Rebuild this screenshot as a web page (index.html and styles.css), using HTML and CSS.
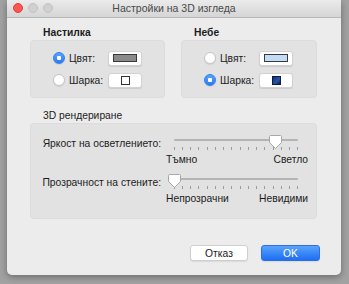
FILE: index.html
```
<!DOCTYPE html>
<html lang="bg">
<head>
    <meta charset="UTF-8">
    <title>Настройки на 3D изгледа</title>
    <link rel="stylesheet" href="styles.css">
</head>
<body>
    <div class="window">
        <div class="titlebar">
            <div class="lights">
                <span class="light red"></span>
                <span class="light"></span>
                <span class="light"></span>
            </div>
            <div class="title">Настройки на 3D изгледа</div>
        </div>

        <div class="content">
            <div class="groups">
                <!-- Floor -->
                <section class="group">
                    <h2>Настилка</h2>
                    <div class="box">
                        <div class="option">
                            <span class="radio checked"></span>
                            <span class="option-label">Цвят:</span>
                            <span class="swatch"><span class="color grey"></span></span>
                        </div>
                        <div class="option">
                            <span class="radio"></span>
                            <span class="option-label">Шарка:</span>
                            <span class="swatch"><span class="pattern empty"></span></span>
                        </div>
                    </div>
                </section>

                <!-- Sky -->
                <section class="group">
                    <h2>Небе</h2>
                    <div class="box">
                        <div class="option">
                            <span class="radio"></span>
                            <span class="option-label">Цвят:</span>
                            <span class="swatch"><span class="color sky"></span></span>
                        </div>
                        <div class="option">
                            <span class="radio checked"></span>
                            <span class="option-label">Шарка:</span>
                            <span class="swatch"><span class="pattern night"></span></span>
                        </div>
                    </div>
                </section>
            </div>

            <!-- Rendering -->
            <section class="group render">
                <h2>3D рендериране</h2>
                <div class="box sliders">
                    <div class="slider-label">Яркост на осветлението:</div>
                    <div class="slider">
                        <svg width="142" height="17" viewBox="0 0 142 17">
                            <rect x="8" y="5" width="124" height="2" rx="1" fill="#b4b4b4"/>
                            <g stroke="#9a9a9a" stroke-width="1">
                                <path d="M8.5 13v3M16.5 13v3M24.5 13v3M32.5 13v3M41.5 13v3M49.5 13v3M57.5 13v3M65.5 13v3M74.5 13v3M82.5 13v3M90.5 13v3M98.5 13v3M107.5 13v3M115.5 13v3M123.5 13v3M131.5 13v3"/>
                            </g>
                            <path d="M104.5 1.5h10a1 1 0 0 1 1 1v6l-6 6l-6-6v-6a1 1 0 0 1 1-1z" fill="#fff" stroke="#a8a8a8"/>
                        </svg>
                        <div class="ticks"><span>Тъмно</span><span>Светло</span></div>
                    </div>

                    <div class="slider-label">Прозрачност на стените:</div>
                    <div class="slider">
                        <svg width="142" height="17" viewBox="0 0 142 17">
                            <rect x="8" y="5" width="124" height="2" rx="1" fill="#b4b4b4"/>
                            <g stroke="#9a9a9a" stroke-width="1">
                                <path d="M8.5 13v3M16.5 13v3M24.5 13v3M32.5 13v3M41.5 13v3M49.5 13v3M57.5 13v3M65.5 13v3M74.5 13v3M82.5 13v3M90.5 13v3M98.5 13v3M107.5 13v3M115.5 13v3M123.5 13v3M131.5 13v3"/>
                            </g>
                            <path d="M3.5 1.5h10a1 1 0 0 1 1 1v6l-6 6l-6-6v-6a1 1 0 0 1 1-1z" fill="#fff" stroke="#a8a8a8"/>
                        </svg>
                        <div class="ticks"><span>Непрозрачни</span><span>Невидими</span></div>
                    </div>
                </div>
            </section>

            <div class="actions">
                <button class="btn">Отказ</button>
                <button class="btn primary">OK</button>
            </div>
        </div>
    </div>
</body>
</html>
```

FILE: styles.css
```
* {
    margin: 0;
    padding: 0;
    box-sizing: border-box;
}
body {
    font-family: 'Liberation Sans', Arial, sans-serif;
    font-size: 10.3px;
    color: #1c1c1c;
    background-color: #a2a2a2;
    width: 349px;
    height: 284px;
    overflow: hidden;
}
.window {
    margin-left: 7px;
    width: 334px;
    height: 275px;
    background-color: #ececec;
    border-radius: 0 0 5px 5px;
    box-shadow: 0 2px 7px rgba(0, 0, 0, 0.35);
    overflow: hidden;
}
.titlebar {
    height: 18px;
    display: flex;
    align-items: center;
    position: relative;
    background: linear-gradient(#ebebeb, #d5d5d5);
    border-bottom: 1px solid #b8b8b8;
}
.lights {
    display: flex;
    gap: 5px;
    padding-left: 6px;
    margin-top: -2px;
}
.light {
    width: 10px;
    height: 10px;
    border-radius: 50%;
    background-color: #d0d0d0;
    border: 1px solid #c2c2c2;
}
.light.red {
    background-color: #fc5753;
    border-color: #df3d38;
}
.title {
    position: absolute;
    left: 0;
    right: 0;
    top: 2px;
    text-align: center;
    font-size: 10.5px;
    color: #4a4a4a;
}
.content {
    padding: 9px 24px 0 23px;
}
.groups {
    display: grid;
    grid-template-columns: 135px 136px;
    gap: 16px;
}
h2 {
    font-size: 10.3px;
    font-weight: bold;
    line-height: 12px;
    padding-left: 13px;
    margin-bottom: 1px;
}
.render h2 {
    font-weight: normal;
}
.box {
    background-color: #e2e2e2;
    border: 1px solid #dcdcdc;
    border-radius: 4px;
}
.groups .box {
    height: 58px;
    padding: 9px 0 0 22px;
    display: flex;
    flex-direction: column;
    gap: 6px;
}
.option {
    display: flex;
    align-items: center;
    height: 16px;
}
.radio {
    width: 12px;
    height: 12px;
    border-radius: 50%;
    background-color: #fff;
    border: 1px solid #c4c4c4;
    box-shadow: 0 1px 1px rgba(0, 0, 0, 0.08);
}
.radio.checked {
    border-color: #2f7ff2;
    background: radial-gradient(circle, #fff 0, #fff 2px, transparent 2.5px), linear-gradient(#5aa2fb, #2a7cf4);
}
.option-label {
    width: 43px;
    padding-left: 4px;
}
.swatch {
    width: 34px;
    height: 15px;
    background-color: #fff;
    border: 1px solid #d2d2d2;
    border-radius: 3px;
    box-shadow: 0 1px 1px rgba(0, 0, 0, 0.1);
    display: flex;
    align-items: center;
    justify-content: center;
}
.color {
    width: 24px;
    height: 8px;
    border: 1px solid #3a3a3a;
}
.color.grey {
    background-color: #8a8a8a;
}
.color.sky {
    background-color: #c3dbf7;
}
.pattern {
    width: 9px;
    height: 9px;
}
.pattern.empty {
    border: 1px solid #333;
    background-color: #fff;
}
.pattern.night {
    background: linear-gradient(135deg, #122f6e, #2c56a8 60%, #0b1b45);
    border: 1px solid #0b1b45;
}
.groups + .group {
    margin-top: 12px;
}
.group h2 + .box {
    margin-top: 1px;
}
.sliders {
    height: 96px;
    padding: 10px 10px 0 0;
    display: grid;
    grid-template-columns: 130px 142px;
    column-gap: 5px;
    row-gap: 7px;
    align-content: start;
}
.slider-label {
    text-align: right;
    padding-top: 4px;
    line-height: 12px;
}
.slider svg {
    display: block;
}
.ticks {
    display: flex;
    justify-content: space-between;
    margin-top: 3px;
    line-height: 12px;
}
.actions {
    display: flex;
    justify-content: flex-end;
    gap: 13px;
    padding-top: 26px;
    margin-right: -3px;
}
.btn {
    width: 58px;
    height: 16px;
    font-family: inherit;
    font-size: 10.3px;
    color: #222;
    background-color: #fff;
    border: 1px solid #cfcfcf;
    border-radius: 3px;
    box-shadow: 0 1px 1px rgba(0, 0, 0, 0.08);
}
.btn.primary {
    width: 59px;
    color: #fff;
    border-color: #2a6fe6;
    background: linear-gradient(#5aa3fb, #1d6ef3);
}
```
